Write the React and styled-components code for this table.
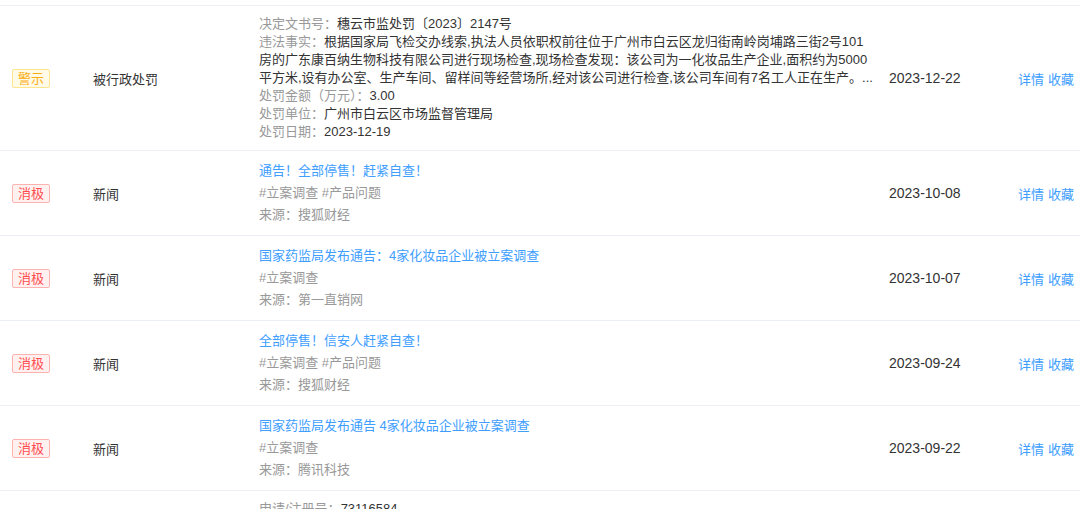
import React from "react";
import styled, { createGlobalStyle } from "styled-components";

const GlobalStyle = createGlobalStyle`
  html, body {
    margin: 0;
    padding: 0;
    background: #fff;
    overflow: hidden;
  }
  body {
    font-family: "Liberation Sans", "Noto Sans CJK SC", sans-serif;
    font-size: 13px;
    color: #333;
  }
`;

const news = [
  {
    title: "通告！全部停售！赶紧自查！",
    tags: "#立案调查 #产品问题",
    source: "搜狐财经",
    date: "2023-10-08",
  },
  {
    title: "国家药监局发布通告：4家化妆品企业被立案调查",
    tags: "#立案调查",
    source: "第一直销网",
    date: "2023-10-07",
  },
  {
    title: "全部停售！信安人赶紧自查！",
    tags: "#立案调查 #产品问题",
    source: "搜狐财经",
    date: "2023-09-24",
  },
  {
    title: "国家药监局发布通告 4家化妆品企业被立案调查",
    tags: "#立案调查",
    source: "腾讯科技",
    date: "2023-09-22",
  },
];

const tagColors = {
  warn: { color: "#faad14", bg: "#fffbe6", border: "#ffe58f" },
  bad: { color: "#ff4d4f", bg: "#fff1f0", border: "#ffb3b0" },
};

export default function App() {
  return (
    <>
      <GlobalStyle />
      <List>
        <Row>
          <Cell>
            <Tag kind="warn">警示</Tag>
          </Cell>
          <TypeCell>被行政处罚</TypeCell>
          <Detail>
            <Line>
              <Label>决定文书号：</Label>穗云市监处罚〔2023〕2147号
            </Line>
            <Line>
              <Label>违法事实：</Label>根据国家局飞检交办线索,执法人员依职权前往位于广州市白云区龙归街南岭岗埔路三街2号101
            </Line>
            <Line>房的广东康百纳生物科技有限公司进行现场检查,现场检查发现：该公司为一化妆品生产企业,面积约为5000</Line>
            <Line>平方米,设有办公室、生产车间、留样间等经营场所,经对该公司进行检查,该公司车间有7名工人正在生产。...</Line>
            <Line>
              <Label>处罚金额（万元）：</Label>3.00
            </Line>
            <Line>
              <Label>处罚单位：</Label>广州市白云区市场监督管理局
            </Line>
            <Line>
              <Label>处罚日期：</Label>2023-12-19
            </Line>
          </Detail>
          <DateCell>2023-12-22</DateCell>
          <Actions>
            <ActionLink>详情</ActionLink>
            <ActionLink>收藏</ActionLink>
          </Actions>
        </Row>

        {news.map((n, i) => (
          <Row key={i}>
            <Cell>
              <Tag kind="bad">消极</Tag>
            </Cell>
            <TypeCell>新闻</TypeCell>
            <Detail>
              <NewsTitle>{n.title}</NewsTitle>
              <NewsMeta>{n.tags}</NewsMeta>
              <NewsMeta>来源：{n.source}</NewsMeta>
            </Detail>
            <DateCell>{n.date}</DateCell>
            <Actions>
              <ActionLink>详情</ActionLink>
              <ActionLink>收藏</ActionLink>
            </Actions>
          </Row>
        ))}

        <Row>
          <Cell>
            <Tag kind="warn">警示</Tag>
          </Cell>
          <TypeCell>商标</TypeCell>
          <Detail>
            <Line>
              <Label>申请/注册号：</Label>73116584
            </Line>
            <Line>
              <Label>商标名称：</Label>康百纳
            </Line>
            <Line>
              <Label>商标状态：</Label>无效
            </Line>
            <Line>
              <Label>申请日期：</Label>2023-08-01
            </Line>
          </Detail>
          <DateCell>2023-08-01</DateCell>
          <Actions>
            <ActionLink>详情</ActionLink>
            <ActionLink>收藏</ActionLink>
          </Actions>
        </Row>
      </List>
    </>
  );
}

const List = styled.div`
  padding-top: 5px;
`;

const Row = styled.div`
  display: grid;
  grid-template-columns: 81px 166px 630px 129px 1fr;
  align-items: center;
  padding: 9px 0 9px 12px;
  border-top: 1px solid #ebeef5;
`;

const Cell = styled.div`
  display: flex;
  align-items: center;
`;

const Tag = styled.span`
  display: inline-block;
  box-sizing: border-box;
  height: 19px;
  line-height: 17px;
  padding: 0 5px;
  font-size: 13px;
  border-radius: 2px;
  color: ${(p) => tagColors[p.kind].color};
  background: ${(p) => tagColors[p.kind].bg};
  border: 1px solid ${(p) => tagColors[p.kind].border};
`;

const TypeCell = styled.div`
  font-size: 13px;
  color: #333;
`;

const Detail = styled.div`
  display: flex;
  flex-direction: column;
  white-space: nowrap;
`;

const Line = styled.div`
  line-height: 18px;
  font-size: 13px;
  color: #333;
`;

const Label = styled.span`
  color: #999;
`;

const NewsTitle = styled.div`
  line-height: 22px;
  font-size: 13px;
  color: #409eff;
`;

const NewsMeta = styled.div`
  line-height: 22px;
  font-size: 13px;
  color: #999;
`;

const DateCell = styled.div`
  font-size: 14px;
  color: #333;
`;

const Actions = styled.div`
  display: flex;
  gap: 4px;
`;

const ActionLink = styled.a`
  font-size: 13px;
  color: #409eff;
  cursor: pointer;
`;
